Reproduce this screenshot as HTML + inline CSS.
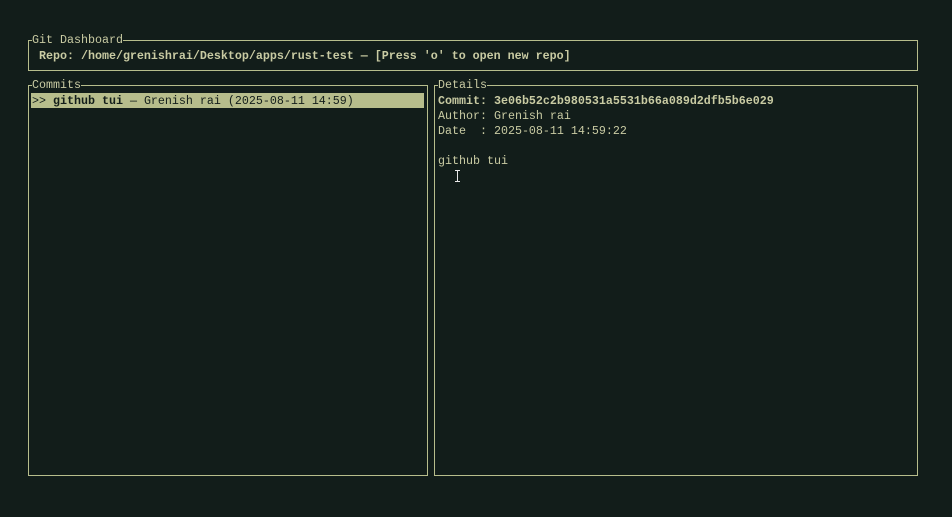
<html><head><style>
body{margin:0;width:952px;height:517px;background:#121d1a;font-family:"Liberation Mono",monospace;font-size:11.67px;color:#c9cba3;position:relative;overflow:hidden}
.b{position:absolute;border:1px solid #b7bd8c;box-sizing:border-box}
.t{position:absolute;top:-7px;left:3px;background:#121d1a;line-height:13px;padding:0}
.l{position:absolute;white-space:pre;line-height:15px}
b{font-weight:bold}
</style></head><body>
<div class="b" style="left:28px;top:40px;width:890px;height:31px"><div class="t">Git Dashboard</div></div>
<div class="l" style="left:39px;top:49px"><b>Repo: /home/grenishrai/Desktop/apps/rust-test — [Press 'o' to open new repo]</b></div>
<div class="b" style="left:28px;top:85px;width:400px;height:391px"><div class="t">Commits</div></div>
<div style="position:absolute;left:31px;top:93px;width:393px;height:15px;background:#b7bd8c"></div>
<div class="l" style="left:32px;top:94px;color:#121d1a">&gt;&gt; <b>github tui</b> — Grenish rai (2025-08-11 14:59)</div>
<div class="b" style="left:434px;top:85px;width:484px;height:391px"><div class="t">Details</div></div>
<div class="l" style="left:438px;top:94px"><b>Commit: 3e06b52c2b980531a5531b66a089d2dfb5b6e029</b>
Author: Grenish rai
Date  : 2025-08-11 14:59:22

github tui</div>
<div style="position:absolute;left:457px;top:170px;width:1px;height:12px;background:#e8e8e8"></div>
<div style="position:absolute;left:455px;top:170px;width:5px;height:1px;background:#e8e8e8"></div>
<div style="position:absolute;left:455px;top:181px;width:5px;height:1px;background:#e8e8e8"></div>
</body></html>
